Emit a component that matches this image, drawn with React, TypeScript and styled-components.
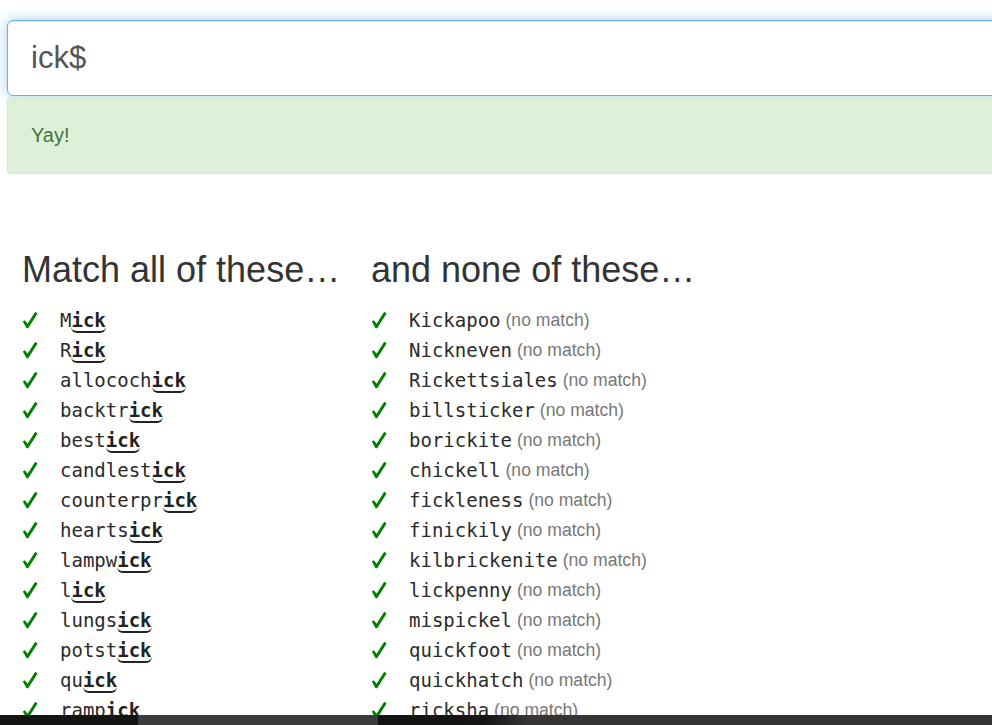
import { useEffect, useRef } from "react";
import styled, { createGlobalStyle } from "styled-components";

const GlobalStyle = createGlobalStyle`
  html, body {
    margin: 0;
    overflow: hidden;
    background: #fff;
  }
  body {
    font-family: "Liberation Sans", Arial, sans-serif;
    color: #333;
  }
`;

const Page = styled.div`
  overflow: clip;
  padding: 20px 0 0 7px;
`;

const Form = styled.div`
  width: 1100px;
`;

const RegexInput = styled.input`
  display: block;
  box-sizing: border-box;
  width: 100%;
  height: 76px;
  padding: 0 23px;
  font-family: "Liberation Sans", Arial, sans-serif;
  font-size: 31px;
  color: #555;
  caret-color: #333;
  background: #fff;
  border: 1px solid #66afe9;
  border-radius: 6px;
  outline: none;
  box-shadow: inset 0 1px 1px rgba(0, 0, 0, 0.075),
    0 0 14px rgba(102, 175, 233, 0.6);
`;

const Alert = styled.div`
  margin-top: 1px;
  padding: 23px;
  font-size: 20px;
  line-height: 28.6px;
  color: #3c763d;
  background: #dff0d8;
  border: 1px solid #d6e9c6;
  border-radius: 4px;
`;

const Columns = styled.div`
  display: grid;
  grid-template-columns: 349px 349px;
  margin-top: 76px;
`;

const Column = styled.section`
  padding: 0 15px;
`;

const Heading = styled.h2`
  margin: 0 0 16px;
  font-size: 36px;
  font-weight: 400;
  line-height: 1.1;
  color: #333;
  white-space: nowrap;
`;

const WordList = styled.ul`
  list-style: none;
  margin: 0;
  padding: 0;
`;

const Row = styled.li`
  display: flex;
  align-items: center;
  height: 30px;
  line-height: 30px;
  white-space: nowrap;
`;

const CheckBox = styled.span`
  flex: 0 0 38px;
  display: flex;
  align-items: center;
  height: 30px;
`;

const Word = styled.span`
  font-family: "DejaVu Sans Mono", "Liberation Mono", monospace;
  font-size: 19px;
  color: #2b2b2b;
`;

const Match = styled.span`
  font-weight: 700;
  color: #222;
  border-bottom: 2px solid #222;
  border-radius: 0 0 6px 6px;
`;

const NoMatch = styled.span`
  margin-left: 5px;
  font-size: 17.6px;
  color: #777;
`;

const BottomBar = styled.div`
  position: fixed;
  left: 0;
  right: 0;
  bottom: 0;
  height: 10px;
  display: flex;
  background: #353535;
`;

const BarSegment = styled.div<{ $w: number; $bg: string }>`
  flex: 0 0 ${({ $w }) => $w}px;
  background: ${({ $bg }) => $bg};
`;

const CheckIcon = () => (
  <svg width="16" height="18" viewBox="0 0 16 18" aria-hidden="true">
    <path
      d="M0.8 10.6 L2.8 9.2 L5.6 12.8 L13.2 0.8 L15.6 2.4 L6.2 17.2 L4.6 17.2 Z"
      fill="#008000"
    />
  </svg>
);

const matches = [
  "Mick",
  "Rick",
  "allocochick",
  "backtrick",
  "bestick",
  "candlestick",
  "counterprick",
  "heartsick",
  "lampwick",
  "lick",
  "lungsick",
  "potstick",
  "quick",
  "rampick",
];

const nonMatches = [
  "Kickapoo",
  "Nickneven",
  "Rickettsiales",
  "billsticker",
  "borickite",
  "chickell",
  "fickleness",
  "finickily",
  "kilbrickenite",
  "lickpenny",
  "mispickel",
  "quickfoot",
  "quickhatch",
  "ricksha",
];

export default function App() {
  const inputRef = useRef<HTMLInputElement>(null);

  useEffect(() => {
    const el = inputRef.current;
    if (el) {
      el.focus({ preventScroll: true });
      el.setSelectionRange(3, 3);
      window.scrollTo(0, 0);
    }
  }, []);

  return (
    <>
      <GlobalStyle />
      <Page>
        <Form>
          <RegexInput ref={inputRef} defaultValue="ick$" spellCheck={false} />
          <Alert>Yay!</Alert>
        </Form>
        <Columns>
          <Column>
            <Heading>Match all of these…</Heading>
            <WordList>
              {matches.map((w) => (
                <Row key={w}>
                  <CheckBox>
                    <CheckIcon />
                  </CheckBox>
                  <Word>
                    {w.slice(0, -3)}
                    <Match>{w.slice(-3)}</Match>
                  </Word>
                </Row>
              ))}
            </WordList>
          </Column>
          <Column>
            <Heading>and none of these…</Heading>
            <WordList>
              {nonMatches.map((w) => (
                <Row key={w}>
                  <CheckBox>
                    <CheckIcon />
                  </CheckBox>
                  <Word>{w}</Word>
                  <NoMatch>(no match)</NoMatch>
                </Row>
              ))}
            </WordList>
          </Column>
        </Columns>
      </Page>
      <BottomBar>
        <BarSegment $w={138} $bg="#141414" />
        <BarSegment $w={240} $bg="#3b3b3b" />
        <BarSegment $w={150} $bg="linear-gradient(90deg, #121212, #151515 70%, #353535)" />
      </BottomBar>
    </>
  );
}
